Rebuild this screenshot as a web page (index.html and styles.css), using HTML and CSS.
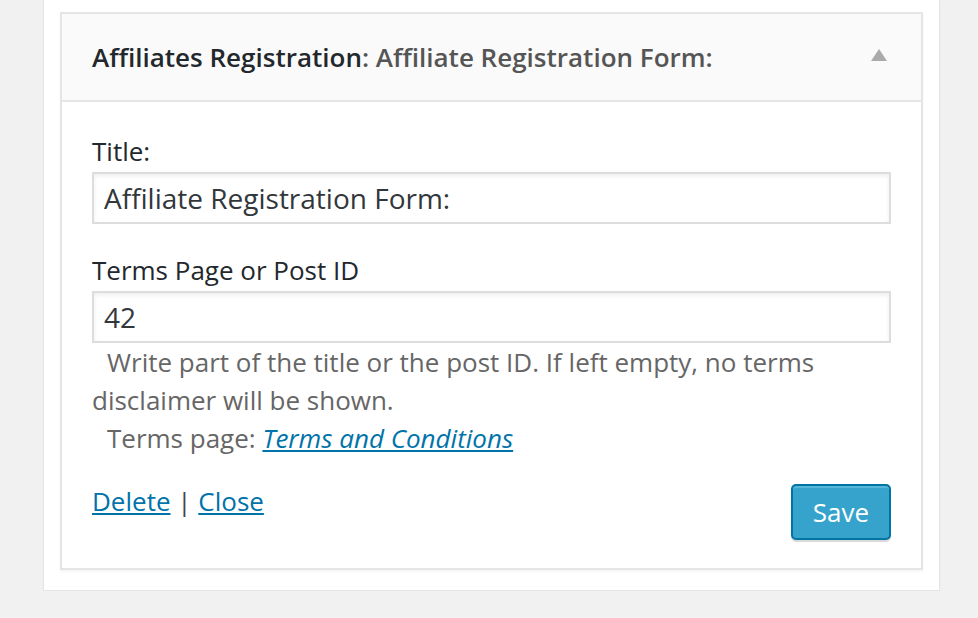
FILE: index.html
```html
<!DOCTYPE html>
<html>
<head>
<meta charset="utf-8">
<link rel="stylesheet" href="styles.css">
</head>
<body>
<div class="sidebar">
  <div class="widget">
    <div class="widget-top">
      <h3 class="widget-title">Affiliates Registration<span class="in-title">: Affiliate Registration Form:</span></h3>
      <span class="toggle"></span>
    </div>
    <div class="widget-inside">
      <label class="field-label">Title:</label>
      <input class="text-input first" type="text" value="Affiliate Registration Form:">
      <label class="field-label">Terms Page or Post ID</label>
      <input class="text-input" type="text" value="42">
      <p class="description"><span class="indent">Write part of the title or the post ID. If left empty, no terms disclaimer will be shown.</span></p>
      <p class="description"><span class="indent">Terms page: <a class="terms-link" href="#">Terms and Conditions</a></span></p>
      <div class="widget-control">
        <div class="control-links"><a href="#">Delete</a> | <a href="#">Close</a></div>
        <button class="save-btn" type="button">Save</button>
      </div>
    </div>
  </div>
</div>
</body>
</html>
```

FILE: styles.css
```css
html, body {
  margin: 0;
  padding: 0;
  background: #f1f1f1;
  font-family: "Open Sans", "Liberation Sans", sans-serif;
  color: #444;
}
.sidebar {
  margin-left: 43px;
  width: 895px;
  height: 578px;
  padding-top: 12px;
  background: #fff;
  border: 1px solid #e5e5e5;
  border-top: none;
  box-shadow: 0 2px 2px rgba(0,0,0,0.04);
}
.widget {
  margin-left: 16px;
  width: 859px;
  border: 2px solid #e5e5e5;
  background: #fff;
  box-shadow: 0 2px 2px rgba(0,0,0,0.04);
}
.widget-top {
  display: flex;
  align-items: center;
  justify-content: space-between;
  height: 86px;
  background: #fafafa;
  border-bottom: 2px solid #e5e5e5;
  padding: 0 34px 0 30px;
}
.widget-title {
  margin: 0;
  font-size: 26px;
  font-weight: 600;
  color: #23282d;
}
.in-title {
  color: #555;
}
.toggle {
  width: 0;
  height: 0;
  border-left: 8px solid transparent;
  border-right: 8px solid transparent;
  border-bottom: 12px solid #aaa;
  margin-top: -4px;
}
.widget-inside {
  padding: 30px 30px 28px 30px;
  font-size: 26px;
  line-height: 38px;
}
.field-label {
  display: block;
  color: #23282d;
}
.text-input {
  display: block;
  box-sizing: border-box;
  width: 100%;
  height: 52px;
  margin: 2px 0 0 0;
  padding: 0 10px;
  border: 2px solid #ddd;
  box-shadow: inset 0 2px 4px rgba(0,0,0,0.07);
  font-family: "Open Sans", "Liberation Sans", sans-serif;
  font-size: 28px;
  color: #32373c;
  background: #fff;
  outline: none;
}
.text-input.first {
  margin-bottom: 27px;
}
.description {
  margin: 0;
  color: #666;
}
.indent {
  padding-left: 15px;
}
.terms-link {
  color: #0073aa;
  font-style: italic;
}
.widget-control {
  display: flex;
  justify-content: space-between;
  align-items: flex-start;
  margin-top: 25px;
}
.control-links {
  color: #444;
  font-size: 26px;
}
.control-links a {
  color: #0073aa;
}
.save-btn {
  width: 100px;
  height: 56px;
  margin-top: 2px;
  background: #35a3cb;
  border: 2px solid #0074a2;
  border-radius: 5px;
  box-shadow: inset 0 2px 0 rgba(120,200,230,0.5), 0 2px 0 rgba(0,0,0,0.15);
  color: #fff;
  font-family: "Open Sans", "Liberation Sans", sans-serif;
  font-size: 26px;
  padding: 0;
}
```
